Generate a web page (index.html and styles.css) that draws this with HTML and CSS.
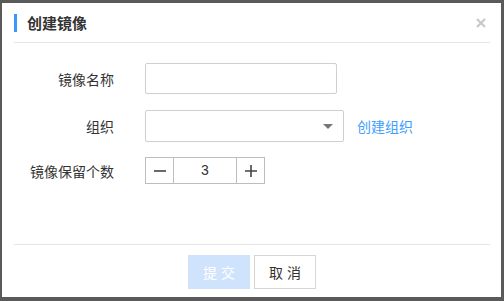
FILE: index.html
```html
<!DOCTYPE html>
<html>
<head>
<meta charset="utf-8">
<link rel="stylesheet" href="styles.css">
</head>
<body>
<div class="dialog">
  <div class="header">
    <span class="bar"></span>
    <span class="title">创建镜像</span>
    <svg class="close" width="10" height="10" viewBox="0 0 10 10"><path d="M1 1L9 9M9 1L1 9" stroke="#c8c8c8" stroke-width="2.2" fill="none"/></svg>
  </div>
  <div class="body">
    <div class="row r1">
      <label class="label">镜像名称</label>
      <div class="input"></div>
    </div>
    <div class="row r2">
      <label class="label">组织</label>
      <div class="select"><span class="caret"></span></div>
      <a class="link">创建组织</a>
    </div>
    <div class="row r3">
      <label class="label">镜像保留个数</label>
      <div class="num">
        <span class="nbtn">
          <svg width="12" height="12" viewBox="0 0 12 12"><path d="M0 6H12" stroke="#444" stroke-width="1.6"/></svg>
        </span>
        <span class="nval">3</span>
        <span class="nbtn">
          <svg width="12" height="12" viewBox="0 0 12 12"><path d="M0 6H12M6 0V12" stroke="#444" stroke-width="1.6"/></svg>
        </span>
      </div>
    </div>
  </div>
  <div class="footer">
    <button class="btn primary">提交</button>
    <button class="btn">取消</button>
  </div>
</div>
</body>
</html>
```
FILE: styles.css
```css
html, body {
  margin: 0;
  padding: 0;
}
body {
  background: #5a5a5a;
  width: 504px;
  height: 301px;
  overflow: hidden;
  font-family: "Noto Sans CJK SC", "Noto Sans", sans-serif;
  color: #333;
}
.dialog {
  margin: 3px 0 0 2px;
  width: 499px;
  height: 294px;
  background: #fff;
  display: flex;
  flex-direction: column;
}
.header {
  height: 39px;
  margin: 0 11px 0 12px;
  border-bottom: 1px solid #e6e6e6;
  display: flex;
  align-items: center;
  position: relative;
}
.bar {
  width: 3px;
  height: 18px;
  background: #3a97ff;
  margin-right: 10px;
}
.title {
  font-size: 15px;
  font-weight: 700;
  color: #333;
  line-height: 20px;
}
.close {
  position: absolute;
  right: 4px;
  top: 15px;
}
.body {
  flex: 1;
  padding-top: 20px;
}
.row {
  display: flex;
  align-items: center;
}
.r2 { margin-top: 16px; }
.r3 { margin-top: 15px; }
.label {
  width: 112px;
  text-align: right;
  font-size: 14px;
  color: #333;
  margin-right: 31px;
}
.input {
  width: 190px;
  height: 29px;
  border: 1px solid #cfcfcf;
  border-radius: 2px;
}
.select {
  width: 197px;
  height: 30px;
  border: 1px solid #cfcfcf;
  border-radius: 2px;
  position: relative;
}
.caret {
  position: absolute;
  right: 10px;
  top: 13px;
  width: 0;
  height: 0;
  border-left: 5px solid transparent;
  border-right: 5px solid transparent;
  border-top: 5px solid #777;
}
.link {
  margin-left: 13px;
  font-size: 14px;
  color: #409eff;
}
.num {
  width: 118px;
  height: 25px;
  border: 1px solid #bdbdbd;
  display: flex;
}
.nbtn {
  width: 27px;
  display: flex;
  align-items: center;
  justify-content: center;
}
.nbtn:first-child { border-right: 1px solid #bdbdbd; }
.nbtn:last-child { border-left: 1px solid #bdbdbd; }
.nval {
  flex: 1;
  text-align: center;
  line-height: 25px;
  font-size: 14px;
  font-family: "Liberation Sans", sans-serif;
  color: #333;
}
.footer {
  margin: 0 11px 0 12px;
  border-top: 1px solid #e6e6e6;
  height: 53px;
  display: flex;
  justify-content: center;
  align-items: flex-start;
  padding-top: 10px;
  gap: 4px;
  box-sizing: border-box;
}
.btn {
  width: 62px;
  height: 34px;
  border: 1px solid #d6d6d6;
  background: #fff;
  font-family: "Noto Sans CJK SC", sans-serif;
  font-size: 14px;
  letter-spacing: 4px;
  text-indent: 4px;
  color: #333;
  padding: 0;
  border-radius: 0;
}
.btn.primary {
  background: #cfe3fc;
  border-color: #cfe3fc;
  color: #fff;
}
```
